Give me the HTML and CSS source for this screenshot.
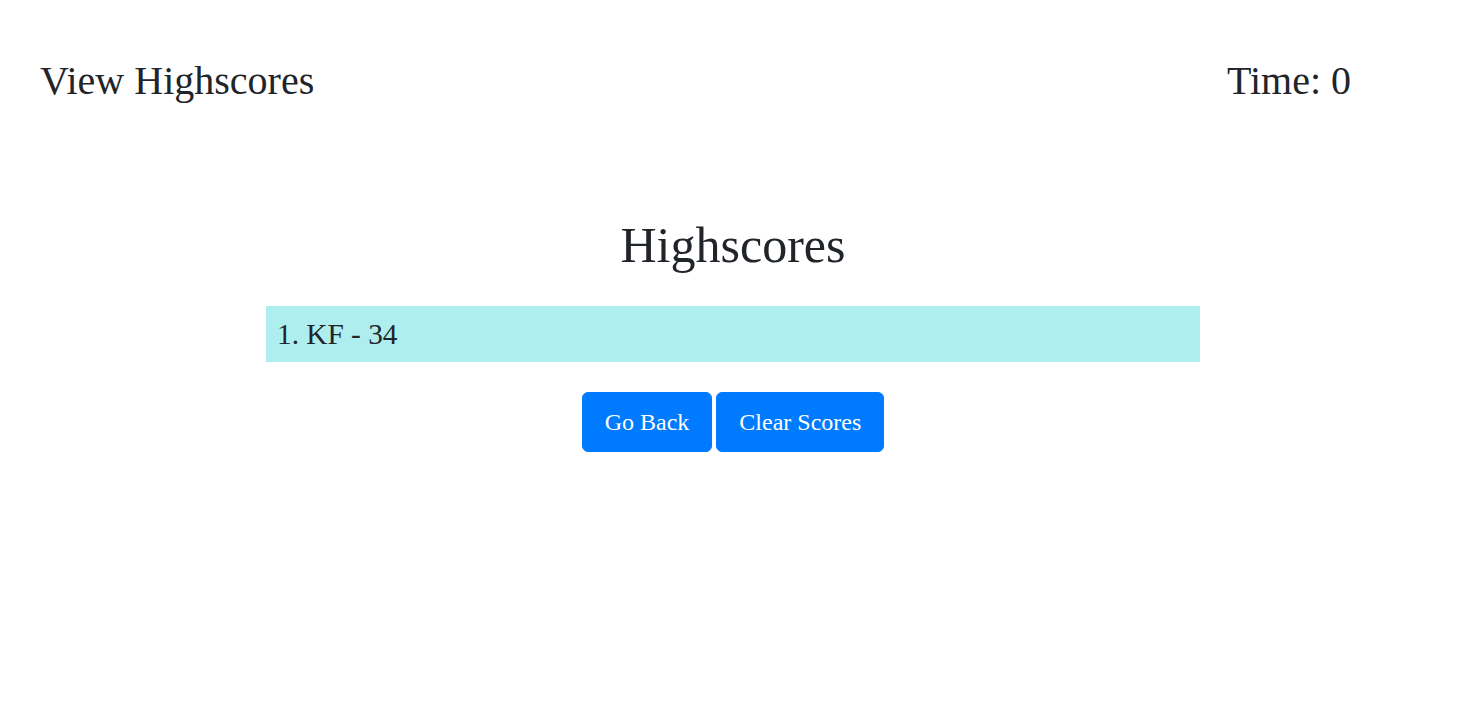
FILE: index.html
```html
<!DOCTYPE html>
<html lang="en">
<head>
<meta charset="utf-8">
<title>Highscores</title>
<link rel="stylesheet" href="styles.css">
</head>
<body>
<header class="topbar">
  <a class="view-link" href="#">View Highscores</a>
  <div class="timer">Time: 0</div>
</header>
<main class="scores">
  <h1 class="scores-title">Highscores</h1>
  <ol class="score-list">
    <li class="score-item">1. KF - 34</li>
  </ol>
  <div class="actions">
    <button class="btn" type="button">Go Back</button>
    <button class="btn" type="button">Clear Scores</button>
  </div>
</main>
</body>
</html>
```
FILE: styles.css
```css
* { box-sizing: border-box; }
html, body { margin: 0; padding: 0; background: #fff; }
body {
  font-family: "Liberation Serif", "Times New Roman", serif;
  color: #212529;
}
.topbar {
  display: flex;
  justify-content: space-between;
  align-items: flex-start;
  padding: 57px 109px 0 40px;
  font-size: 40px;
  line-height: 48px;
}
.view-link { color: #212529; text-decoration: none; }
.timer { color: #212529; }
.scores {
  display: flex;
  flex-direction: column;
  align-items: center;
  padding-left: 6px;
  margin-top: 110px;
}
.scores-title {
  margin: 0 0 31px;
  font-size: 50px;
  line-height: 60px;
  font-weight: 400;
}
.score-list {
  list-style: none;
  margin: 0;
  padding: 0;
  width: 934px;
}
.score-item {
  background: #afeeee;
  font-size: 29.3px;
  line-height: 44px;
  padding: 6px 11px;
}
.actions {
  display: flex;
  gap: 4px;
  margin-top: 30px;
}
.btn {
  font-family: "Liberation Serif", "Times New Roman", serif;
  font-size: 24px;
  line-height: 36px;
  padding: 11px 22px;
  border: 1px solid #007bff;
  background: #007bff;
  color: #fff;
  border-radius: 6px;
  cursor: pointer;
}
```
